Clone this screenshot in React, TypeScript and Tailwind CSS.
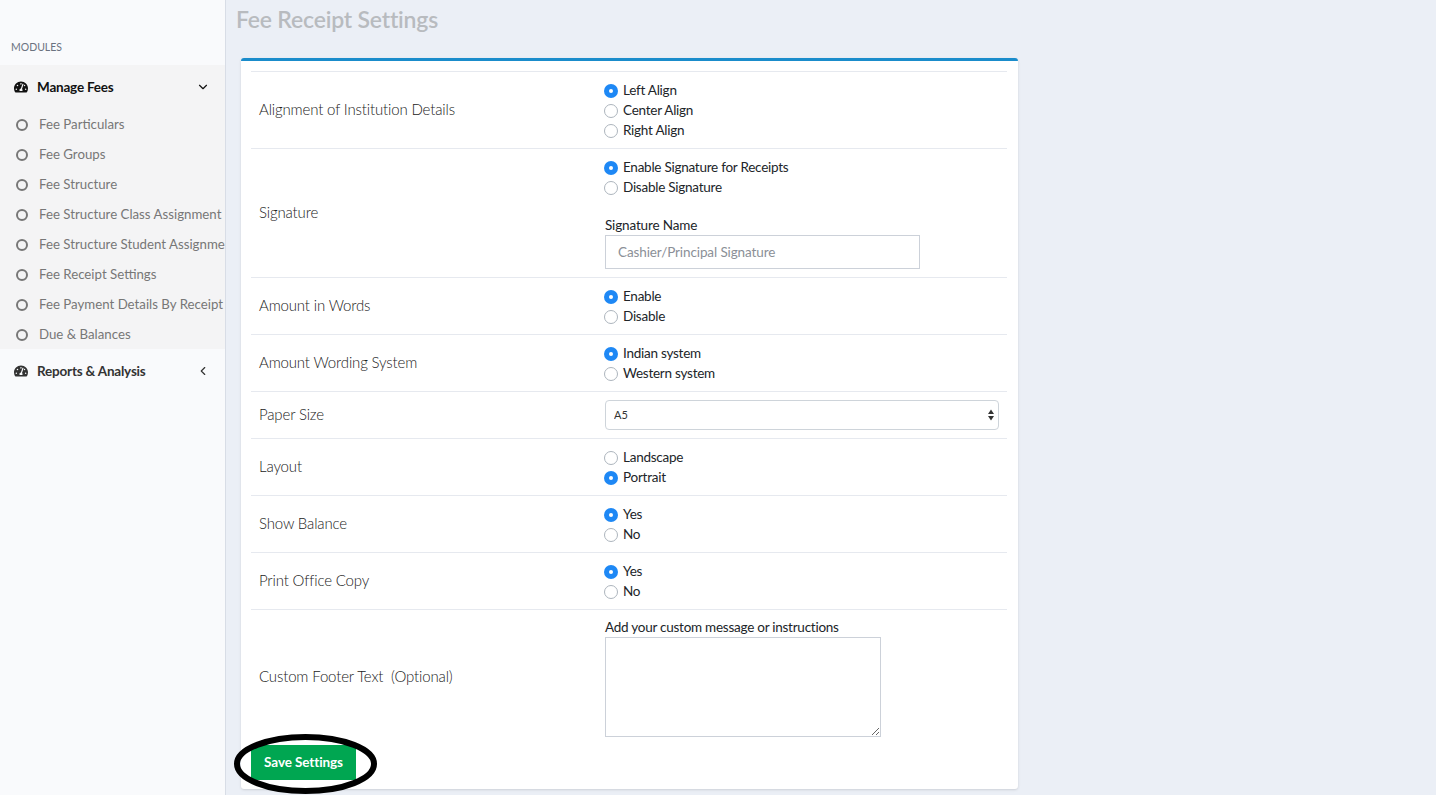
import { FaTachometerAlt } from "react-icons/fa"
import { ChevronDown, ChevronLeft } from "lucide-react"

const feeLinks = [
  "Fee Particulars",
  "Fee Groups",
  "Fee Structure",
  "Fee Structure Class Assignment",
  "Fee Structure Student Assignment",
  "Fee Receipt Settings",
  "Fee Payment Details By Receipt Number",
  "Due & Balances",
]

function Radio({ label, checked = false }: { label: string; checked?: boolean }) {
  return (
    <label className="-ml-px flex h-5 items-center text-[13.5px] tracking-[-0.25px] text-[#212529]">
      {checked ? (
        <span className="mr-[5px] mt-[2px] flex h-[14px] w-[14px] shrink-0 items-center justify-center rounded-full bg-[#1e88f5]">
          <span className="h-1 w-1 rounded-full bg-white" />
        </span>
      ) : (
        <span className="mr-[5px] mt-[2px] h-[14px] w-[14px] shrink-0 rounded-full border border-[#adb5bd] bg-white" />
      )}
      {label}
    </label>
  )
}

function Row({ label, children, tight = false }: { label: string; children: React.ReactNode; tight?: boolean }) {
  return (
    <div className="grid grid-cols-[346px_1fr] border-t border-[#e6e9ef]">
      <div className="flex items-center whitespace-pre-wrap px-2 pb-[10px] pt-[8px] text-[15px] font-light tracking-[-0.15px] text-[#222]">{label}</div>
      <div className={tight ? "px-2 pb-2 pt-[7px]" : "p-2"}>{children}</div>
    </div>
  )
}

export default function App() {
  return (
    <div className="flex h-[795px] w-full overflow-hidden bg-[#ebeff6] font-[Lato,sans-serif]">
      <aside className="w-[226px] shrink-0 border-r border-[#d8dde6] bg-[#f9fafc]">
        <div className="flex h-[65px] items-end pb-[9px] pl-[11px] text-[10.5px] text-[#6b7280]">MODULES</div>
        <div className="bg-[#f4f4f5]">
          <div className="flex h-11 items-center pl-[14px] pr-[15px] text-[13.5px] font-bold tracking-[-0.2px] text-[#111]">
            <FaTachometerAlt className="mr-[9px] h-[14px] w-[14px]" />
            Manage Fees
            <ChevronDown className="ml-auto h-[14px] w-[14px]" />
          </div>
          <ul>
            {feeLinks.map((link) => (
              <li key={link} className="flex h-[30px] items-center overflow-hidden whitespace-nowrap pl-4 pt-[2px] text-[13.25px] text-[#777]">
                <span className="mr-[11px] h-3 w-3 shrink-0 rounded-full border-2 border-[#777]" />
                {link}
              </li>
            ))}
          </ul>
        </div>
        <div className="flex h-11 items-center pl-[14px] pr-[15px] text-[13.5px] font-bold tracking-[-0.2px] text-[#333]">
          <FaTachometerAlt className="mr-[9px] h-[14px] w-[14px]" />
          Reports & Analysis
          <ChevronLeft className="ml-auto h-[14px] w-[14px]" />
        </div>
      </aside>

      <main className="min-w-0 flex-1">
        <h1 className="mb-[22px] h-9 pl-[10px] text-[23px] font-semibold leading-[38px] tracking-[-0.2px] text-[#b8bbbf]">Fee Receipt Settings</h1>

        <div className="relative ml-[15px] h-[731px] w-[777px] rounded-[3px] border-t-[3px] border-[#1a8ccb] bg-white pl-[10px] pr-[11px] pt-[10px] shadow-sm">
          <Row label="Alignment of Institution Details">
            <Radio label="Left Align" checked />
            <Radio label="Center Align" />
            <Radio label="Right Align" />
          </Row>
          <Row label="Signature">
            <Radio label="Enable Signature for Receipts" checked />
            <Radio label="Disable Signature" />
            <div className="mt-[18px] h-5 text-[13.5px] leading-5 tracking-[-0.15px] text-[#212529]">Signature Name</div>
            <input
              placeholder="Cashier/Principal Signature"
              className="block h-[34px] w-[315px] border border-[#ccd1d9] px-3 text-[13.5px] tracking-[-0.1px] outline-none placeholder:text-[#8b9097]"
            />
          </Row>
          <Row label="Amount in Words">
            <Radio label="Enable" checked />
            <Radio label="Disable" />
          </Row>
          <Row label="Amount Wording System">
            <Radio label="Indian system" checked />
            <Radio label="Western system" />
          </Row>
          <Row label="Paper Size">
            <div className="relative">
              <select className="block h-[30px] w-full appearance-none rounded border border-[#ced4da] bg-white pl-2 text-[11px] text-[#333] outline-none">
                <option>A5</option>
              </select>
              <svg viewBox="0 0 8 14" className="absolute right-[4px] top-[8px] h-[14px] w-2 fill-[#333]">
                <path d="M4 1.5 7 6H1zM1 8h6l-3 4.5z" />
              </svg>
            </div>
          </Row>
          <Row label="Layout">
            <Radio label="Landscape" />
            <Radio label="Portrait" checked />
          </Row>
          <Row label="Show Balance">
            <Radio label="Yes" checked />
            <Radio label="No" />
          </Row>
          <Row label="Print Office Copy">
            <Radio label="Yes" checked />
            <Radio label="No" />
          </Row>
          <Row label="Custom Footer Text  (Optional)" tight>
            <div className="h-5 text-[13.5px] leading-5 tracking-[-0.25px] text-[#212529]">Add your custom message or instructions</div>
            <textarea className="block h-[100px] w-[276px] border border-[#ccd1d9] outline-none" />
          </Row>

          <button className="h-[35px] w-[105px] bg-[#00a651] text-[13.5px] font-bold tracking-[-0.1px] text-white">Save Settings</button>

          {/* marker ring drawn over the button */}
          <svg viewBox="0 0 143 60" className="absolute left-[-7px] top-[673px] h-[60px] w-[143px] fill-none stroke-black stroke-[6]">
            <ellipse cx="71.5" cy="30" rx="68.5" ry="27" />
          </svg>
        </div>
      </main>
    </div>
  )
}
